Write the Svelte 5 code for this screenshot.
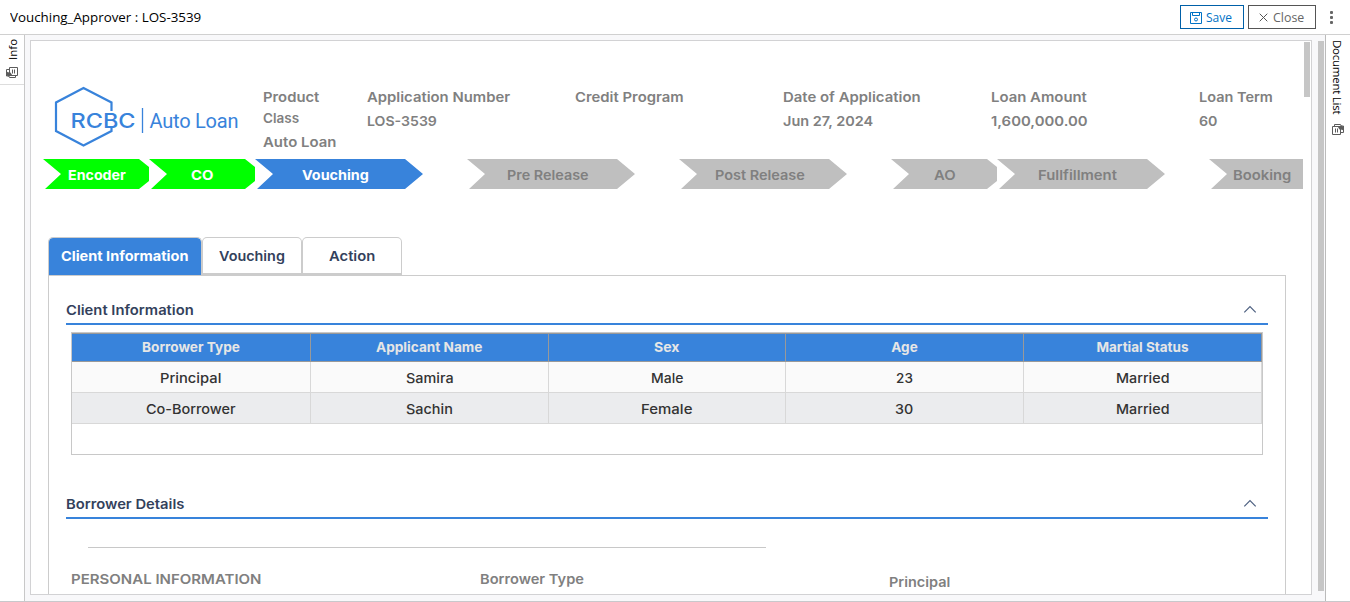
<script>
  const facts = [
    { label: ['Application Number', 143], value: ['LOS-3539', 70] },
    { label: ['Credit Program', 109], value: null },
    { label: ['Date of Application', 138], value: ['Jun 27, 2024', 90] },
    { label: ['Loan Amount', 96], value: ['1,600,000.00', 97] },
    { label: ['Loan Term', 74], value: ['60', 19] }
  ];
  const steps = [
    { name: 'Encoder', w: 58, kind: 'done short' },
    { name: 'CO', w: 22, kind: 'done short' },
    { name: 'Vouching', w: 67, kind: 'active' },
    { name: 'Pre Release', w: 82, kind: '' },
    { name: 'Post Release', w: 90, kind: '' },
    { name: 'AO', w: 22, kind: 'short' },
    { name: 'Fullfillment', w: 79, kind: '' },
    { name: 'Booking', w: 58, kind: 'last' }
  ];
  const tabs = [['Client Information', 128], ['Vouching', 66], ['Action', 46]];
  const heads = [['Borrower Type', 98], ['Applicant Name', 106], ['Sex', 25], ['Age', 26], ['Martial Status', 92]];
  const rows = [
    [['Principal', 61], ['Samira', 48], ['Male', 32], ['23', 17], ['Married', 53]],
    [['Co-Borrower', 90], ['Sachin', 47], ['Female', 51], ['30', 18], ['Married', 53]]
  ];

  // Stretches a label to its set width
  function fit(node, width) {
    const apply = () => {
      node.style.transform = `scaleX(${width / node.offsetWidth})`;
      node.style.marginRight = `${width - node.offsetWidth}px`;
    };
    apply();
    document.fonts.ready.then(apply);
  }
</script>

{#snippet label(text, width)}<span class="fit" use:fit={width}>{text}</span>{/snippet}

{#snippet section(text, width)}
  <header class="section">
    {@render label(text, width)}
    <svg width="14" height="9" viewBox="0 0 14 9"><path d="M1.3 7.3 7 1.6l5.7 5.7" fill="none" stroke="#4d6080" stroke-width="1.2" /></svg>
  </header>
{/snippet}

{#snippet docs()}
  <svg class="docs" width="12" height="11" viewBox="0 0 12 11" fill="none" stroke="#5c5c5c">
    <path d="M.5 2.5h8v8h-8zM2.5 2.5v-2h6l1 1.5h2v6.5h-3" />
    <path d="M3.5 4.5v4M5.5 4.5v4" />
    <path d="M6 3.5 8.5 1.5l3 1v4L9.5 5.5 8.5 6.5z" fill="#5c5c5c" stroke="none" />
  </svg>
{/snippet}

<div class="app">
  <div class="bar">
    <h1>{@render label('Vouching_Approver : LOS-3539', 191)}</h1>
    <button class="save">
      <svg width="12" height="12" viewBox="0 0 12 12" fill="none" stroke="#0072c6"><path d="M.5.5h11v11H.5zM2.5.5v3h7v-3" /><circle cx="6" cy="7.5" r="1.5" /></svg>
      {@render label('Save', 26)}
    </button>
    <button class="close">
      <svg width="9" height="9" viewBox="0 0 9 9" stroke="#555"><path d="M.7.7l7.6 7.6M8.3.7.7 8.3" /></svg>
      {@render label('Close', 31)}
    </button>
    <div class="dots"><i></i><i></i><i></i></div>
  </div>

  <div class="body">
    <aside class="left">
      <div class="info"><span class="vert flip">Info</span><span class="turned">{@render docs()}</span></div>
    </aside>
    <main>
      <div class="frame">
        <div class="top">
          <svg class="logo" width="190" height="64" viewBox="0 0 190 64">
            <path d="M61.5 26V17.5L33.5 3 6 17.5V46L33.5 60.5 61.5 46V42.5" fill="none" stroke="#3883db" stroke-width="2.2" />
            <text class="bank" x="20.5" y="43" textLength="65" lengthAdjust="spacingAndGlyphs">RCBC</text>
            <path d="M92.5 23v25" stroke="#3883db" stroke-width="1.3" />
            <text class="loan" x="99.5" y="43" textLength="89">Auto Loan</text>
          </svg>
          <div class="fact first">
            <div class="wrap">{@render label('Product', 56)}<br />{@render label('Class', 36)}</div>
            <div>{@render label('Auto Loan', 73)}</div>
          </div>
          {#each facts as f}
            <div class="fact">
              <div>{@render label(f.label[0], f.label[1])}</div>
              {#if f.value}<div>{@render label(f.value[0], f.value[1])}</div>{/if}
            </div>
          {/each}
        </div>

        <div class="steps">
          {#each steps as s}
            <div class="step {s.kind}">{@render label(s.name, s.w)}</div>
          {/each}
        </div>

        <nav>
          {#each tabs as t, i}
            <div class="tab" class:on={i === 0}>{@render label(t[0], t[1])}</div>
          {/each}
        </nav>

        <div class="panel">
          {@render section('Client Information', 128)}
          <div class="grid">
            <div class="row head">
              {#each heads as h}<div>{@render label(h[0], h[1])}</div>{/each}
            </div>
            {#each rows as r}
              <div class="row">
                {#each r as c}<div>{@render label(c[0], c[1])}</div>{/each}
              </div>
            {/each}
          </div>
          <div class="second">{@render section('Borrower Details', 118)}</div>
          <div class="rule"></div>
          <div class="details">
            <div>{@render label('PERSONAL INFORMATION', 190)}</div>
            <div>{@render label('Borrower Type', 104)}</div>
            <div class="low">{@render label('Principal', 61)}</div>
          </div>
        </div>
        <div class="thumb inner"></div>
      </div>
      <div class="thumb outer"></div>
    </main>
    <aside class="right">
      <span class="vert">Document List</span>
      {@render docs()}
    </aside>
  </div>
</div>

<style>
  :global(body) { margin: 0; background: #fff; }
  * { box-sizing: border-box; }
  .app { width: 1350px; height: 602px; overflow: hidden; display: flex; flex-direction: column; font: 600 13.5px/20px Inter, sans-serif; color: #808080; }
  .fit { display: inline-block; white-space: nowrap; transform-origin: 0 50%; }
  .bar { height: 35px; flex: none; border-bottom: 1px solid #d0d0d0; display: flex; padding: 5px 0 0 10px; }
  h1 { font: 400 13px/24px "Open Sans", sans-serif; color: #000; margin: 0; flex: 1; }
  button { height: 24px; border: 1px solid #0060a8; background: #fff; color: #0072c6; font: 400 12px/22px "Open Sans", sans-serif; display: flex; align-items: center; padding: 1px 0 0 9px; margin: 0 4px 0 0; }
  .save { width: 64px; gap: 4px; }
  .close { width: 68px; border-color: #555; color: #666; padding-left: 10px; gap: 5px; }
  .dots { width: 30px; display: flex; flex-direction: column; gap: 2px; padding: 6px 0 0 9.5px; }
  .dots i { width: 3px; height: 3px; background: #666; border-radius: 1px; }
  .body { flex: 1; min-height: 0; display: flex; border-bottom: 1px solid #c8c8cb; }
  .left { width: 25px; border-right: 1px solid #c8c8c8; }
  .info { height: 50px; border-bottom: 1px solid #ddd; display: flex; flex-direction: column; align-items: center; padding-top: 6px; gap: 7px; }
  .vert { writing-mode: vertical-rl; font: 400 11.5px/16px "Open Sans", sans-serif; color: #000; white-space: nowrap; }
  .flip { transform: rotate(180deg); height: 19px; margin-left: 2px; }
  .docs { display: block; flex: none; }
  .turned { transform: rotate(180deg); }
  .right { width: 25px; flex: none; border-left: 1px solid #bbb; display: flex; flex-direction: column; align-items: center; padding-top: 5px; gap: 8px; }
  .right .vert { height: 76px; letter-spacing: -.25px; margin-right: 2px; }
  main { flex: 1; min-width: 0; background: #f8f8fa; padding: 5px 0 0 5px; display: flex; position: relative; }
  .frame { width: 1282px; height: 555px; border: 1px solid #d2d2d4; background: #fff; overflow: hidden; position: relative; }
  .thumb { position: absolute; background: #c6c6c6; width: 6px; }
  .inner { right: 1px; top: 1px; height: 55px; }
  .outer { right: 1px; top: 6px; height: 550px; }
  .top { display: flex; padding-left: 19px; height: 118px; }
  .logo { flex: none; margin: 44px 23px 0 0; }
  .bank { font: 500 20px Inter, sans-serif; fill: #3883db; }
  .loan { font: 400 20px Roboto, sans-serif; fill: #3883db; }
  .fact { width: 208px; padding-top: 46px; line-height: 24px; flex: none; }
  .fact.first { width: 104px; }
  .fact div { margin-top: -2px; margin-bottom: 2px; }
  .fact .wrap { line-height: 21px; margin-top: 0; margin-bottom: 3px; }
  .steps { display: flex; height: 30px; width: 1272px; padding-left: 12px; overflow: hidden; }
  .step { width: 168px; margin-right: 44px; height: 30px; flex: none; background: #bfbfbf; text-align: center; line-height: 32px; padding-right: 7px; clip-path: polygon(0 0, 150px 0, 168px 50%, 150px 100%, 2px 100%, 18px 50%); }
  .step.short { width: 106px; margin: 0; padding: 0 0 0 1px; clip-path: polygon(0 0, 96px 0, 106px 8px, 106px 22px, 96px 100%, 2px 100%, 18px 50%); }
  .step.last { width: 106px; padding: 0 0 0 1px; clip-path: polygon(0 0, 100% 0, 100% 100%, 2px 100%, 18px 50%); }
  .step.done { background: #0f0; color: #fff; font-weight: 700; }
  .step.active { background: #3883db; color: #fff; font-weight: 700; }
  nav { display: flex; margin: 48px 0 0 17px; height: 38px; color: #33415c; font-weight: 600; }
  .tab { width: 100px; border: 1px solid #ccc; border-bottom-width: 2px; border-radius: 5px 5px 0 0; text-align: center; line-height: 37px; }
  .tab.on { width: 154px; background: #3883db; color: #fff; font-weight: 700; border-bottom: 0; border-color: #ccc; background-clip: padding-box; }
  .panel { width: 1238px; height: 400px; margin-left: 17px; border: 1px solid #ccc; padding: 23px 17px; }
  .section { height: 26px; width: 1202px; border-bottom: 2px solid #3883db; display: flex; justify-content: space-between; padding: 1px 11px 0 0; color: #33415c; font-weight: 600; }
  .section svg { margin-top: 5px; }
  .grid { width: 1192px; height: 123px; margin: 7px 0 0 5px; border: 1px solid #c8c8c8; }
  .row { display: grid; grid-template-columns: 239px 238px 237px 238px 238px; grid-template-rows: 100%; height: 31px; line-height: 32px; text-align: center; color: #333; background: #fafafa; border-bottom: 1px solid #d8d8d8; font-weight: 550; }
  .row + .row + .row { background: #ebecee; }
  .row div { border-right: 1px solid #d8d8d8; }
  .row.head { height: 29px; line-height: 27px; background: #3883db; color: #e6e6e6; font-weight: 700; border: 0; border-top: 1px solid #999; border-bottom: 1px solid #999; }
  .row.head div { border-color: #999; }
  .second { margin-top: 38px; }
  .rule { width: 678px; border-top: 1px solid #c8c8c8; margin: 28px 0 0 22px; }
  .details { display: flex; padding: 21px 0 0 5px; font-weight: 600; }
  .details div { width: 409px; flex: none; }
  .details .low { padding-top: 3px; }
</style>
